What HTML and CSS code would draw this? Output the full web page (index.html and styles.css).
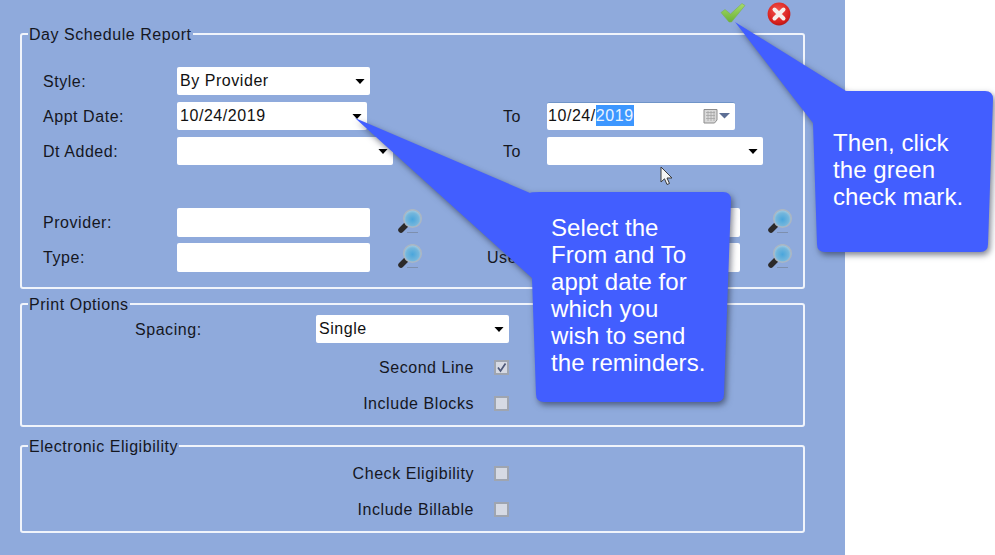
FILE: index.html
```html
<!DOCTYPE html>
<html lang="en">
<head>
<meta charset="utf-8">
<title>Day Schedule Report</title>
<link rel="stylesheet" href="styles.css">
</head>
<body>
<svg class="defs" width="0" height="0" aria-hidden="true">
  <defs>
    <radialGradient id="glass" cx="0.5" cy="0.55" r="0.6">
      <stop offset="0" stop-color="#4aa6dc"/>
      <stop offset="0.6" stop-color="#74b6dc"/>
      <stop offset="1" stop-color="#bcd6e4"/>
    </radialGradient>
    <linearGradient id="tick" x1="0" y1="0" x2="0" y2="1">
      <stop offset="0" stop-color="#a6dc6a"/>
      <stop offset="1" stop-color="#6cb236"/>
    </linearGradient>
    <radialGradient id="red" cx="0.45" cy="0.35" r="0.75">
      <stop offset="0" stop-color="#f4574f"/>
      <stop offset="0.7" stop-color="#d81f1c"/>
      <stop offset="1" stop-color="#9d1414"/>
    </radialGradient>
    <symbol id="magnifier" viewBox="0 0 25 25">
      <path d="M3 21 L8.5 15.5" stroke="#2c2a2a" stroke-width="5.5" stroke-linecap="round"/>
      <circle cx="14.5" cy="9.5" r="8.8" fill="url(#glass)" stroke="#a9b6c4" stroke-width="1.6"/>
      <path d="M9 23.5 H20" stroke="#7d8fae" stroke-width="1"/>
    </symbol>
    <symbol id="caret" viewBox="0 0 11 6">
      <path d="M0 0 H11 L5.5 6 Z" fill="#000"/>
    </symbol>
  </defs>
</svg>

<main class="panel">
  <div class="toolbar">
    <button class="tool" type="button" aria-label="Accept">
      <svg width="26" height="21" viewBox="0 0 26 21">
        <path d="M1 10.5 L5 7.5 L10.5 12 L22 1.5 L25 3.5 L11.5 20 L9 20 Z" fill="url(#tick)" stroke="#7bae55" stroke-width=".6"/>
      </svg>
    </button>
    <button class="tool" type="button" aria-label="Cancel">
      <svg width="24" height="24" viewBox="0 0 24 24">
        <circle cx="12" cy="12" r="11.4" fill="url(#red)"/>
        <path d="M7.5 7.5 L16.5 16.5 M16.5 7.5 L7.5 16.5" stroke="#f6efea" stroke-width="4" stroke-linecap="round"/>
      </svg>
    </button>
  </div>

  <fieldset class="group group-report">
    <legend>Day Schedule Report</legend>
    <div class="report-grid">
      <span class="label">Style:</span>
      <div class="field w-193 span-rest">By Provider<svg class="caret"><use href="#caret"/></svg></div>

      <span class="label">Appt Date:</span>
      <div class="field w-190">10/24/2019<svg class="caret"><use href="#caret"/></svg></div>
      <span class="gap-cell"></span>
      <span class="label label-to">To</span>
      <div class="field w-188 field-date">10/24/<span class="selected">2019</span>
        <svg class="calendar" width="30" height="16" viewBox="0 0 30 16">
          <path d="M1 1.5 H14 V12 L11.5 15 H1 Z" fill="#d9d9d9" stroke="#8d8d8d"/>
          <path d="M3 4.5 H12 M3 7.5 H12 M3 10.5 H12 M5 3 V13 M8 3 V13 M11 3 V13" stroke="#a6a6a6" stroke-width=".8"/>
          <path d="M16 5 H27 L21.5 10.5 Z" fill="#5d6f95"/>
        </svg>
      </div>

      <span class="label">Dt Added:</span>
      <div class="field w-216"><svg class="caret"><use href="#caret"/></svg></div>
      <span class="gap-cell"></span>
      <span class="label label-to">To</span>
      <div class="field w-216"><svg class="caret"><use href="#caret"/></svg></div>

      <span class="spacer-row"></span>

      <span class="label">Provider:</span>
      <div class="lookup"><div class="field w-193"></div><svg class="magnifier"><use href="#magnifier"/></svg></div>
      <span class="gap-cell"></span>
      <span class="label"></span>
      <div class="lookup"><div class="field w-193"></div><svg class="magnifier"><use href="#magnifier"/></svg></div>

      <span class="label">Type:</span>
      <div class="lookup"><div class="field w-193"></div><svg class="magnifier"><use href="#magnifier"/></svg></div>
      <span class="gap-cell"></span>
      <span class="label">User:</span>
      <div class="lookup"><div class="field w-193"></div><svg class="magnifier"><use href="#magnifier"/></svg></div>
    </div>
  </fieldset>

  <fieldset class="group group-print">
    <legend>Print Options</legend>
    <div class="spacing-row">
      <span class="label spacing-label">Spacing:</span>
      <div class="field w-193">Single<svg class="caret"><use href="#caret"/></svg></div>
    </div>
    <div class="check-row check-second">
      <span class="label">Second Line</span>
      <span class="check"><svg width="13" height="13" viewBox="0 0 13 13"><path d="M3 6.5 L5.5 10 L10.5 2.5" fill="none" stroke="#4d5878" stroke-width="1.7"/></svg></span>
    </div>
    <div class="check-row check-blocks">
      <span class="label">Include Blocks</span>
      <span class="check"></span>
    </div>
  </fieldset>

  <fieldset class="group group-elig">
    <legend>Electronic Eligibility</legend>
    <div class="check-row check-elig">
      <span class="label">Check Eligibility</span>
      <span class="check"></span>
    </div>
    <div class="check-row check-bill">
      <span class="label">Include Billable</span>
      <span class="check"></span>
    </div>
  </fieldset>
</main>

<svg class="cursor" width="14" height="20" viewBox="0 0 14 20" aria-hidden="true">
  <path d="M1 1 V16 L4.5 12.8 L7 18.5 L9.5 17.5 L7 12 H12 Z" fill="#f4f4f4" stroke="#3a3a3a" stroke-width="1"/>
</svg>

<svg class="callouts" width="995" height="555" viewBox="0 0 995 555" aria-hidden="true">
  <path class="bubble" d="M355 118 L530 193 Q531 192 540 192 H723 Q731 192 731 200 L724 394 Q724 402 716 402 H544 Q536 402 536 394 L532 278 Z"/>
  <path class="bubble" d="M735 22 L846 91 H985 Q993 91 993 99 L988 244 Q988 252 980 252 H825 Q817 252 817 244 L813 123 Z"/>
</svg>
<p class="note note-range">Select the<br>From and To<br>appt date for<br>which you<br>wish to send<br>the reminders.</p>
<p class="note note-check">Then, click<br>the green<br>check mark.</p>
</body>
</html>
```
FILE: styles.css
```css
* { box-sizing: border-box; }

html, body {
  margin: 0;
  height: 555px;
  overflow: hidden;
  background: #fff;
}

body {
  position: relative;
  font-family: "Liberation Sans", Arial, sans-serif;
  font-size: 16px;
  letter-spacing: 0.55px;
  color: #15171f;
}

.defs { position: absolute; }

.panel {
  width: 845px;
  height: 555px;
  background: #8faadc;
  padding: 0 40px 0 20px;
  display: flex;
  flex-direction: column;
}

.toolbar {
  height: 25px;
  flex: none;
  display: flex;
  justify-content: flex-end;
  align-items: flex-start;
  gap: 21px;
  padding: 2px 14px 0 0;
}

.tool {
  border: 0;
  padding: 0;
  background: none;
  display: block;
}

.tool svg { display: block; }

.group {
  margin: 0;
  padding: 0;
  width: 785px;
  min-width: 0;
  flex: none;
  border: 2px solid #f0f4fb;
  border-radius: 3px;
}

.group legend {
  margin-left: 6px;
  padding: 0 1px;
  line-height: 17px;
  font-size: 16px;
  color: #15171f;
  transform: translateY(1px);
}

.group-report { height: 264px; }
.group-print { height: 132px; margin-top: 6px; }
.group-elig { height: 96px; margin-top: 10px; }

.report-grid {
  display: grid;
  grid-template-columns: 134px 216px 94px 60px 216px;
  grid-template-rows: 28px 28px 28px 29px 28px 28px;
  row-gap: 7px;
  padding: 25px 0 0 21px;
}

.label {
  display: flex;
  align-items: center;
  padding-top: 2px;
  white-space: nowrap;
}

.label-to { padding-left: 16px; }

.span-rest { grid-column: 2 / -1; }

.spacer-row { grid-column: 1 / -1; }

.field {
  position: relative;
  flex: none;
  height: 28px;
  background: #fff;
  border-radius: 2px;
  padding-left: 3px;
  line-height: 27px;
  white-space: nowrap;
  color: #111;
}

.w-188 { width: 188px; }
.w-190 { width: 190px; }
.w-193 { width: 193px; }
.w-216 { width: 216px; }

.field-date {
  border-top: 1px solid #6f94c8;
  line-height: 26px;
  padding-left: 1px;
}

.selected {
  background: #3d97ff;
  color: #eaf3ff;
  padding: 2px 0;
}

.caret {
  position: absolute;
  right: 5px;
  top: 12px;
  width: 10px;
  height: 5px;
}

.calendar {
  position: absolute;
  left: 156px;
  top: 5px;
}

.lookup {
  display: flex;
  align-items: flex-start;
  gap: 28px;
}

.lookup .field { height: 29px; }

.magnifier {
  width: 25px;
  height: 25px;
  flex: none;
  margin-top: 1px;
}

.spacing-row {
  display: flex;
  padding: 3px 0 0 113px;
  height: 31px;
}

.spacing-row .field { line-height: 28px; }

.spacing-label { width: 181px; }

.check-row {
  width: 487px;
  display: flex;
  justify-content: flex-end;
  align-items: center;
  gap: 20px;
  height: 18px;
}

.check-second { margin-top: 15px; }
.check-blocks { margin-top: 18px; }
.check-elig { margin-top: 10px; }
.check-bill { margin-top: 18px; }

.check {
  width: 15px;
  height: 15px;
  flex: none;
  border: 2px solid #9fa5b0;
  background: #d6dae4;
  display: block;
}

.check svg { display: block; margin: -1px 0 0 -1px; }

.cursor {
  position: absolute;
  left: 660px;
  top: 166px;
}

.callouts {
  position: absolute;
  left: 0;
  top: 0;
  pointer-events: none;
}

.bubble {
  fill: #425eff;
  filter: drop-shadow(2px 3px 3px rgba(20, 25, 50, 0.55));
}

.note {
  position: absolute;
  margin: 0;
  color: #fff;
  font-size: 24px;
  line-height: 27px;
  letter-spacing: 0.08px;
  white-space: nowrap;
}

.note-range { left: 551px; top: 214px; }
.note-check { left: 833px; top: 129px; }
```
